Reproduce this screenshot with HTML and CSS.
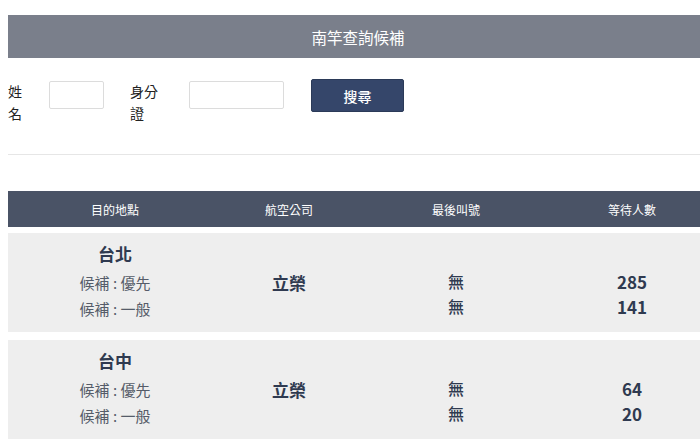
FILE: index.html
```html
<!DOCTYPE html>
<html lang="zh-Hant">
<head>
<meta charset="utf-8">
<title>南竿查詢候補</title>
<link rel="stylesheet" href="styles.css">
</head>
<body>
<div class="page">
  <div class="title-bar">南竿查詢候補</div>
  <form class="search">
    <label class="lbl lbl-name">姓名</label>
    <input class="inp inp-name" type="text">
    <label class="lbl lbl-id">身分證</label>
    <input class="inp inp-id" type="text">
    <button class="btn" type="button">搜尋</button>
  </form>
  <div class="sep"></div>
  <div class="thead">
    <div class="cell">目的地點</div>
    <div class="cell">航空公司</div>
    <div class="cell">最後叫號</div>
    <div class="cell">等待人數</div>
  </div>
  <div class="row">
    <div class="cell dest">
      <div class="city">台北</div>
      <div class="sub">候補 : 優先</div>
      <div class="sub">候補 : 一般</div>
    </div>
    <div class="cell airline">立榮</div>
    <div class="cell vals">
      <div class="val"></div>
      <div class="val">無</div>
      <div class="val">無</div>
    </div>
    <div class="cell vals nums">
      <div class="val"></div>
      <div class="val">285</div>
      <div class="val">141</div>
    </div>
  </div>
  <div class="row">
    <div class="cell dest">
      <div class="city">台中</div>
      <div class="sub">候補 : 優先</div>
      <div class="sub">候補 : 一般</div>
    </div>
    <div class="cell airline">立榮</div>
    <div class="cell vals">
      <div class="val"></div>
      <div class="val">無</div>
      <div class="val">無</div>
    </div>
    <div class="cell vals nums">
      <div class="val"></div>
      <div class="val">64</div>
      <div class="val">20</div>
    </div>
  </div>
</div>
</body>
</html>
```

FILE: styles.css
```css
html {
  overflow: hidden;
}
body {
  margin: 8px 0 0 8px;
  width: 700px;
  font-family: "Noto Sans CJK TC", "Noto Sans", sans-serif;
  color: #2f3a50;
  background: #ffffff;
}
.page {
  width: 700px;
  padding-top: 7px;
}
.title-bar {
  height: 43px;
  background: #7a7f8b;
  color: #ffffff;
  font-size: 15.5px;
  display: flex;
  align-items: center;
  justify-content: center;
}
.search {
  display: flex;
  align-items: flex-start;
  margin-top: 21px;
  height: 64px;
}
.lbl {
  font-size: 14px;
  line-height: 22px;
  color: #222;
  margin-top: 1px;
}
.lbl-name {
  width: 14px;
  margin-right: 27px;
}
.lbl-id {
  width: 29px;
  margin-right: 30px;
}
.inp {
  box-sizing: border-box;
  height: 28px;
  margin-top: 2px;
  border: 1px solid #dcdcdc;
  border-radius: 2px;
  background: #fff;
  padding: 0;
}
.inp-name {
  width: 55px;
  margin-right: 26px;
}
.inp-id {
  width: 95px;
  margin-right: 27px;
}
.btn {
  width: 93px;
  height: 33px;
  background: #35466a;
  color: #fff;
  border: 1px solid #2b3a58;
  border-radius: 2px;
  font-family: inherit;
  font-size: 14px;
  font-weight: 500;
  padding: 0;
}
.sep {
  height: 1px;
  background: #e6e6e6;
  margin-top: 11px;
}
.thead {
  display: grid;
  grid-template-columns: 214px 134px 200px 152px;
  height: 36px;
  margin-top: 36px;
  background: #4a5366;
  color: #ffffff;
  font-size: 12px;
}
.thead .cell {
  display: flex;
  align-items: center;
  justify-content: center;
}
.row {
  display: grid;
  grid-template-columns: 214px 134px 200px 152px;
  height: 99px;
  margin-top: 6px;
  background: #eeeeee;
}
.row + .row {
  margin-top: 8px;
}
.row .cell {
  display: flex;
  flex-direction: column;
  align-items: center;
  justify-content: center;
}
.dest {
  padding-bottom: 2px;
}
.city {
  font-size: 17px;
  font-weight: 700;
  line-height: 24px;
  margin-bottom: 4px;
  color: #2f3a50;
}
.sub {
  font-size: 15px;
  line-height: 26px;
  color: #555c69;
}
.airline {
  font-size: 17px;
  font-weight: 700;
  color: #2f3a50;
}
.vals {
  padding-bottom: 3px;
}
.val {
  height: 25px;
  line-height: 25px;
  font-size: 16px;
  font-weight: 500;
  color: #2f3a50;
}
.nums .val {
  font-size: 17px;
  font-weight: 600;
}
```
